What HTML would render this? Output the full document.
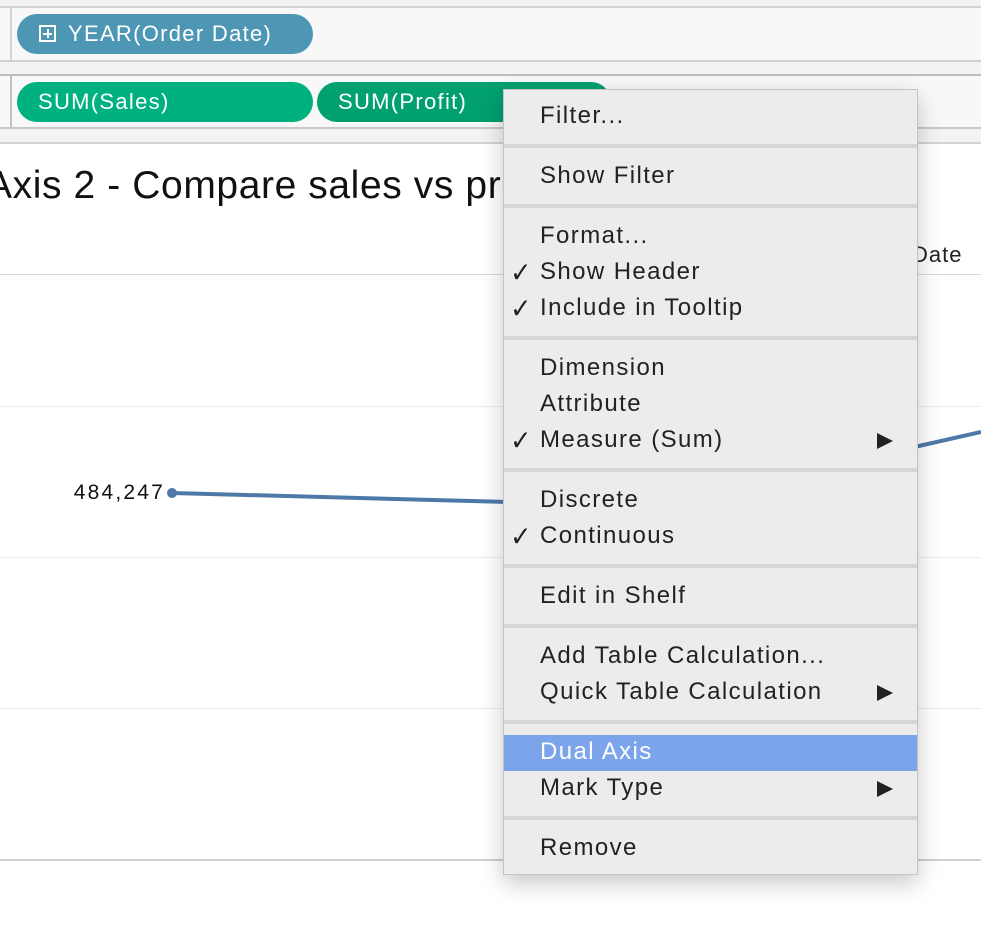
<!DOCTYPE html>
<html><head><style>
*{margin:0;padding:0;box-sizing:border-box}
body{width:981px;height:943px;overflow:hidden;background:#fff;font-family:"Liberation Sans",sans-serif;position:relative}
.a{position:absolute}
.pill{position:absolute;height:40px;border-radius:20px;color:#fff;font-size:22px;line-height:40px;padding-left:21px;letter-spacing:1.3px}
.menu{position:absolute;left:503px;top:89px;width:415px;height:786px;background:#ececec;border:1px solid #c4c4c4;box-shadow:0 8px 22px rgba(0,0,0,.22);font-family:"Liberation Sans",sans-serif;font-size:24px;letter-spacing:1.4px;color:#222}
.sec{padding:9px 0}
.sep{height:6px;border-top:4px solid #d6d6d6;background:#ececec}
.it{height:36px;line-height:34px;padding-left:36px;position:relative}
.ck::before{content:"\2713";position:absolute;left:5px;top:1px;font-size:28px;font-family:"DejaVu Sans",sans-serif;font-weight:normal;transform:scaleX(0.9)}
.ar::after{content:"";position:absolute;right:24px;top:10px;border-left:16px solid #222;border-top:8px solid transparent;border-bottom:8px solid transparent}
.hl{background:#7ba4ea;color:#fff}
</style></head><body>
<div class="a" style="left:0;top:0;width:981px;height:143px;background:#f3f3f3"></div>
<div class="a" style="left:0;top:6px;width:981px;height:2px;background:#d4d4d4"></div>
<div class="a" style="left:0;top:8px;width:981px;height:53px;background:#f8f8f8"></div>
<div class="a" style="left:0;top:60px;width:981px;height:2px;background:#d0d0d0"></div>
<div class="a" style="left:0;top:74px;width:981px;height:2px;background:#bdbdbd"></div>
<div class="a" style="left:0;top:76px;width:981px;height:52px;background:#f8f8f8"></div>
<div class="a" style="left:0;top:127px;width:981px;height:2px;background:#c8c8c8"></div>
<div class="a" style="left:0;top:142px;width:981px;height:2px;background:#d4d4d4"></div>
<div class="a" style="left:10px;top:8px;width:2px;height:53px;background:#d4d4d4"></div>
<div class="a" style="left:10px;top:76px;width:2px;height:52px;background:#c0c0c0"></div>
<div class="pill" style="left:17px;top:14px;width:296px;background:#4d97b4;padding-left:22px"><span style="display:inline-block;width:17px;height:17px;border:2px solid #fff;vertical-align:-1px;position:relative;margin-right:12px"><span style="position:absolute;left:2px;top:5.5px;width:9px;height:2px;background:#fff"></span><span style="position:absolute;left:5.5px;top:2px;width:2px;height:9px;background:#fff"></span></span>YEAR(Order Date)</div>
<div class="pill" style="left:17px;top:82px;width:296px;background:#00b180">SUM(Sales)</div>
<div class="pill" style="left:317px;top:82px;width:294px;background:#00a070">SUM(Profit)</div>
<div class="a" style="left:-14px;top:164px;font-size:39px;letter-spacing:0.6px;color:#111;white-space:nowrap">Axis 2 - Compare sales vs profit by region</div>
<div class="a" style="left:912px;top:242px;font-size:22px;letter-spacing:1px;color:#222">Date</div>
<div class="a" style="left:0;top:274px;width:981px;height:1px;background:#d8d8d8"></div>
<div class="a" style="left:0;top:406px;width:981px;height:1px;background:#ececec"></div>
<div class="a" style="left:0;top:557px;width:981px;height:1px;background:#ececec"></div>
<div class="a" style="left:0;top:708px;width:981px;height:1px;background:#ececec"></div>
<div class="a" style="left:0;top:859px;width:981px;height:2px;background:#cfcfcf"></div>
<svg class="a" style="left:0;top:0" width="981" height="943"><line x1="172" y1="493" x2="510" y2="502" stroke="#4e79a7" stroke-width="4"/><circle cx="172" cy="493" r="5" fill="#4e79a7"/><line x1="910" y1="448" x2="981" y2="432" stroke="#4e79a7" stroke-width="4"/></svg>
<div class="a" style="left:30px;top:481px;width:135px;text-align:right;font-size:21px;letter-spacing:2.2px;color:#111">484,247</div>
<div class="menu">
<div class="sec"><div class="it">Filter...</div></div><div class="sep"></div>
<div class="sec"><div class="it">Show Filter</div></div><div class="sep"></div>
<div class="sec"><div class="it">Format...</div><div class="it ck">Show Header</div><div class="it ck">Include in Tooltip</div></div><div class="sep"></div>
<div class="sec"><div class="it">Dimension</div><div class="it">Attribute</div><div class="it ck ar">Measure (Sum)</div></div><div class="sep"></div>
<div class="sec"><div class="it">Discrete</div><div class="it ck">Continuous</div></div><div class="sep"></div>
<div class="sec"><div class="it">Edit in Shelf</div></div><div class="sep"></div>
<div class="sec"><div class="it">Add Table Calculation...</div><div class="it ar">Quick Table Calculation</div></div><div class="sep"></div>
<div class="sec"><div class="it hl">Dual Axis</div><div class="it ar">Mark Type</div></div><div class="sep"></div>
<div class="sec"><div class="it">Remove</div></div>
</div>
</body></html>
